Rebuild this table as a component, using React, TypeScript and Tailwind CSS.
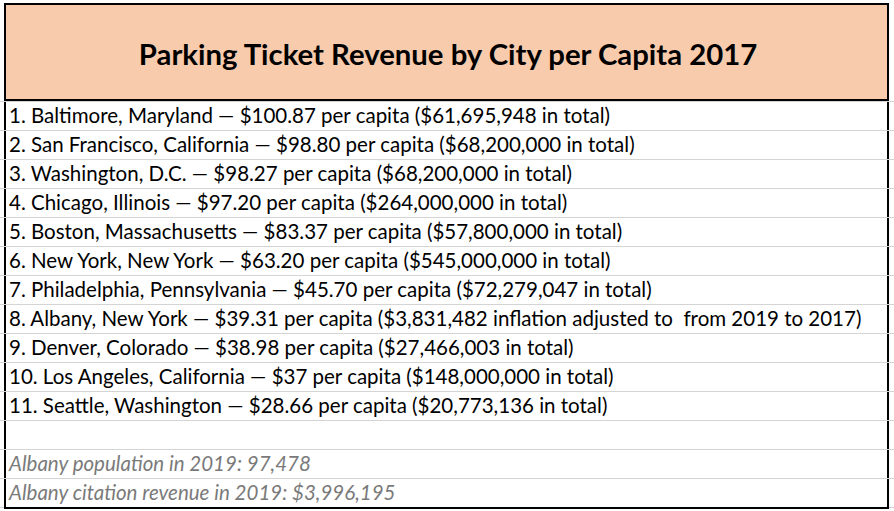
const rows = [
  "1. Baltimore, Maryland — $100.87 per capita ($61,695,948 in total)",
  "2. San Francisco, California — $98.80 per capita ($68,200,000 in total)",
  "3. Washington, D.C. — $98.27 per capita ($68,200,000 in total)",
  "4. Chicago, Illinois — $97.20 per capita ($264,000,000 in total)",
  "5. Boston, Massachusetts — $83.37 per capita ($57,800,000 in total)",
  "6. New York, New York — $63.20 per capita ($545,000,000 in total)",
  "7. Philadelphia, Pennsylvania — $45.70 per capita ($72,279,047 in total)",
  "8. Albany, New York — $39.31 per capita ($3,831,482 inflation adjusted to\u00a0 from 2019 to 2017)",
  "9. Denver, Colorado — $38.98 per capita ($27,466,003 in total)",
  "10. Los Angeles, California — $37 per capita ($148,000,000 in total)",
  "11. Seattle, Washington — $28.66 per capita ($20,773,136 in total)",
  "",
];

const notes = ["Albany population in 2019: 97,478", "Albany citation revenue in 2019: $3,996,195"];

function Row({ children, italic, last }: { children?: React.ReactNode; italic?: boolean; last?: boolean }) {
  return (
    <div className="flex h-[29px] border-b border-[#d4d4d4]">
      <div className="w-[4px]" />
      <div
        className={
          "w-[885px] flex items-end pl-[3px] pb-[5px] border-x-2 border-black whitespace-nowrap text-[20.5px] leading-none " +
          (italic ? "italic text-[#7a7a7a] " : "text-black ") +
          (last ? "h-[30px] border-b-2" : "")
        }
      >
        {children}
      </div>
    </div>
  );
}

export default function App() {
  return (
    <div className="w-[894px] h-[511px] bg-white pt-[3px] font-['Lato',sans-serif]">
      <div className="flex border-b border-[#d4d4d4]">
        <div className="w-[4px]" />
        <div className="w-[885px] h-[98px] border-2 border-black bg-[#f8cbad] flex items-center justify-center pt-[4px] pl-[3px]">
          <h1 className="text-[29.3px] font-bold text-black leading-none">Parking Ticket Revenue by City per Capita 2017</h1>
        </div>
      </div>
      {rows.map((r, i) => (
        <Row key={i}>{r}</Row>
      ))}
      <Row italic>{notes[0]}</Row>
      <Row italic last>{notes[1]}</Row>
    </div>
  );
}
